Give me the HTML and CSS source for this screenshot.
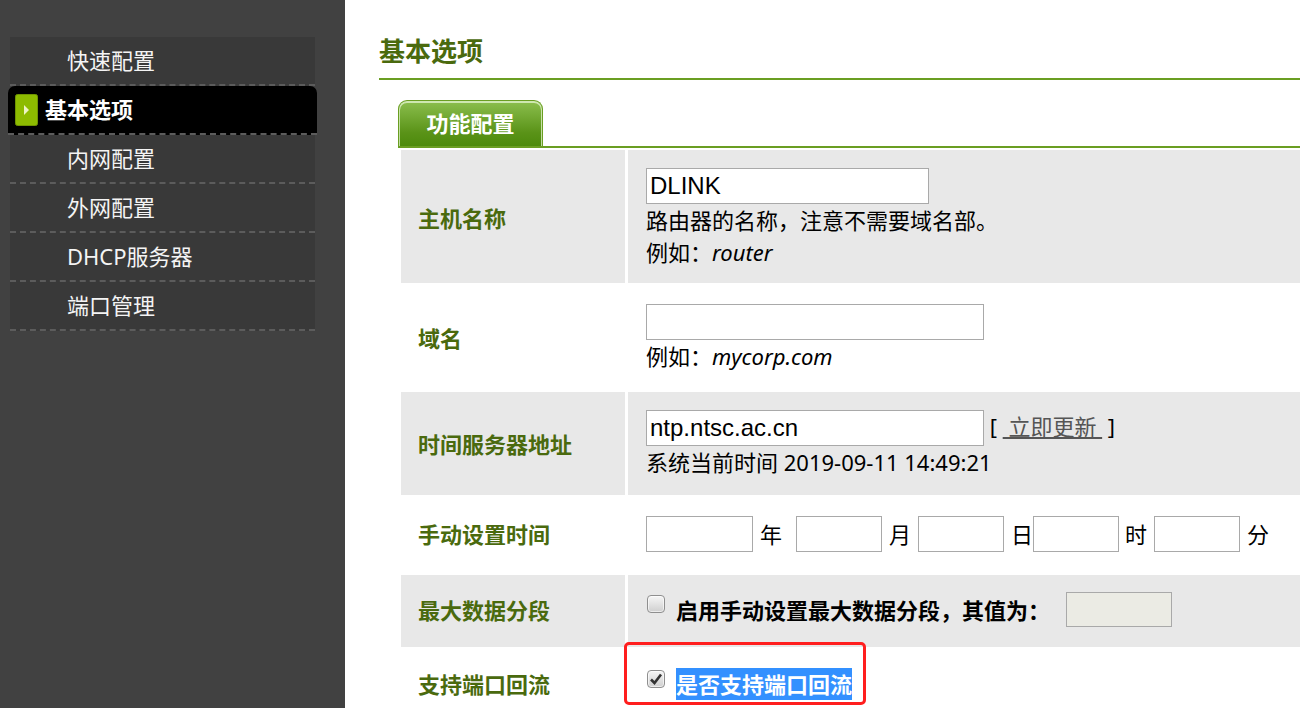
FILE: index.html
```html
<!DOCTYPE html>
<html lang="zh-CN">
<head>
  <meta charset="UTF-8" />
  <title>基本选项</title>
  <link rel="stylesheet" href="styles.css">
</head>
<body>

  <div class="sidebar">
    <ul class="menu">
      <li class="menu-item">快速配置</li>
      <li class="menu-item active">
        <svg class="arrow" width="23" height="32" viewBox="0 0 23 32">
          <rect x="0.5" y="0.5" width="22" height="31" rx="2" fill="#8dbb00" stroke="#6f9400" />
          <polygon points="9,11 14,16 9,21" fill="#eef4c4" />
        </svg>
        基本选项
      </li>
      <li class="menu-item">内网配置</li>
      <li class="menu-item">外网配置</li>
      <li class="menu-item">DHCP服务器</li>
      <li class="menu-item">端口管理</li>
    </ul>
  </div>

  <div class="main">
    <h1 class="page-title">基本选项</h1>

    <div class="content">
      <div class="tabs">
        <span class="tab">功能配置</span>
      </div>

      <table class="settings">
        <tr class="shade">
          <td class="name">主机名称</td>
          <td class="value">
            <input class="field" type="text" value="DLINK" />
            <div>路由器的名称，注意不需要域名部。</div>
            <div>例如：<i>router</i></div>
          </td>
        </tr>
        <tr class="roomy">
          <td class="name">域名</td>
          <td class="value">
            <input class="field wide" type="text" />
            <div>例如：<i>mycorp.com</i></div>
          </td>
        </tr>
        <tr class="shade server">
          <td class="name">时间服务器地址</td>
          <td class="value">
            <div class="inline"><input class="field wide" type="text" value="ntp.ntsc.ac.cn" /> [ <a href="#" class="link">&nbsp;立即更新&nbsp;</a> ]</div>
            <div>系统当前时间 2019-09-11 14:49:21</div>
          </td>
        </tr>
        <tr class="dates">
          <td class="name">手动设置时间</td>
          <td class="value">
            <div class="date-row">
              <input class="field year" type="text" />
              <span class="unit u-year">年</span>
              <input class="field part" type="text" />
              <span class="unit">月</span>
              <input class="field part" type="text" />
              <span class="unit u-day">日</span>
              <input class="field part" type="text" />
              <span class="unit u-hour">时</span>
              <input class="field part" type="text" />
              <span class="unit">分</span>
            </div>
          </td>
        </tr>
        <tr class="shade mss">
          <td class="name">最大数据分段</td>
          <td class="value">
            <div class="opt-row">
              <span class="check"></span>
              <b>启用手动设置最大数据分段，其值为：</b>
              <input class="field small" type="text" disabled />
            </div>
          </td>
        </tr>
        <tr class="loop">
          <td class="name">支持端口回流</td>
          <td class="value">
            <span class="mark"></span>
            <div class="opt-row">
              <span class="check checked">
                <svg width="14" height="14" viewBox="0 0 14 14">
                  <path d="M2 7.5 L5.5 11 L12 2.5" fill="none" stroke="#333" stroke-width="2.6" />
                </svg>
              </span>
              <b class="picked">是否支持端口回流</b>
            </div>
          </td>
        </tr>
      </table>
    </div>
  </div>

</body>
</html>
```

FILE: styles.css
```css
html, body {
  margin: 0;
  height: 708px;
  overflow: hidden;
}

body {
  display: flex;
  font-family: 'Noto Sans', 'Noto Sans CJK SC', sans-serif;
  font-size: 22px;
  color: #000;
  background: #fff;
}

.sidebar {
  width: 345px;
  flex-shrink: 0;
  background-color: #414141;
  padding-top: 37px;
}

.menu {
  list-style: none;
  margin: 0 30px 0 10px;
  padding: 0;
}

.menu-item {
  height: 47px;
  line-height: 47px;
  padding-left: 57px;
  background-color: #393939;
  color: #f4f4f4;
  border-bottom: 2px dashed #5c5c5c;
}

.menu-item.active {
  display: flex;
  align-items: center;
  margin: 0 -2px;
  padding-left: 7px;
  background-color: #000;
  color: #fff;
  font-weight: bold;
  border-radius: 7px 7px 0 0;
}

.arrow {
  margin-right: 7px;
}

.main {
  flex: 1;
  padding-left: 34px;
  min-width: 0;
}

.page-title {
  margin: 33px 0 0;
  padding-bottom: 9px;
  font-size: 26px;
  line-height: 36px;
  color: #4a6a0e;
  border-bottom: 2px solid #6a9e22;
}

.content {
  margin-left: 19px;
  margin-top: 20px;
}

.tabs {
  height: 46px;
  border-bottom: 2px solid #6a9e22;
}

.tab {
  display: inline-block;
  box-sizing: border-box;
  width: 145px;
  height: 46px;
  line-height: 44px;
  text-align: center;
  color: #fff;
  font-weight: bold;
  background: linear-gradient(#8cbf4e, #5a9318 70%, #4d8a0c);
  border: 1px solid #6a9e22;
  border-bottom: none;
  border-radius: 9px 9px 0 0;
  box-shadow: inset 0 1px 0 1px rgba(230, 245, 210, 0.75);
}

.settings {
  width: 960px;
  border-collapse: separate;
  border-spacing: 3px 2px;
  line-height: 32px;
}

.settings td {
  padding: 18px 18px 15px;
}

.shade td {
  background-color: #e8e8e8;
}

.name {
  width: 189px;
  vertical-align: middle;
  color: #4a6a0e;
  font-weight: bold;
}

.settings td.name {
  padding-left: 17px;
}

.value {
  vertical-align: top;
}

.roomy td {
  padding-top: 19px;
  padding-bottom: 18px;
}

.server td {
  padding-bottom: 17px;
}

.field {
  box-sizing: border-box;
  display: block;
  width: 283px;
  height: 36px;
  margin: 0;
  padding: 0 3px;
  border: 1px solid #a9a9a9;
  font-family: 'Liberation Sans', Arial, sans-serif;
  font-size: 24px;
  background: #fff;
}

.field.wide {
  width: 338px;
}

.inline .field {
  display: inline-block;
  vertical-align: top;
}

.link {
  color: #555;
}

.dates td {
  padding-top: 19px;
  padding-bottom: 21px;
}

.date-row {
  display: flex;
  align-items: center;
  height: 36px;
}

.date-row .field {
  width: 86px;
  flex-shrink: 0;
}

.date-row .field.year {
  width: 107px;
}

.unit {
  margin: 0 7px;
}

.unit.u-year {
  margin-right: 14px;
}

.unit.u-day {
  margin-right: 0;
}

.unit.u-hour {
  margin: 0 7px 0 6px;
}

.mss td {
  padding-top: 17px;
  padding-bottom: 20px;
}

.opt-row {
  display: flex;
  align-items: center;
  height: 35px;
}

.loop .opt-row {
  height: 32px;
}

.field.small {
  width: 106px;
  height: 35px;
  margin-left: 16px;
  background: #ebebe4;
}

.check {
  display: inline-flex;
  align-items: center;
  justify-content: center;
  flex-shrink: 0;
  box-sizing: border-box;
  width: 18px;
  height: 18px;
  margin: 0 11px 0 1px;
  align-self: flex-start;
  margin-top: 3px;
  border: 1px solid #8f8f8f;
  border-radius: 4px;
  background: linear-gradient(#f6f6f6, #cfcfcf);
  box-shadow: inset 0 0 0 1px rgba(255, 255, 255, 0.6);
}

.loop .check {
  margin-top: 2px;
}

.loop td {
  padding-top: 19px;
  padding-bottom: 23px;
}

.loop .value {
  position: relative;
}

.mark {
  position: absolute;
  left: -4px;
  top: -7px;
  width: 242px;
  height: 63px;
  box-sizing: border-box;
  border: 3px solid #ff1e1e;
  border-radius: 5px;
}

.picked {
  background-color: #3390ff;
  color: #fff;
}
```
